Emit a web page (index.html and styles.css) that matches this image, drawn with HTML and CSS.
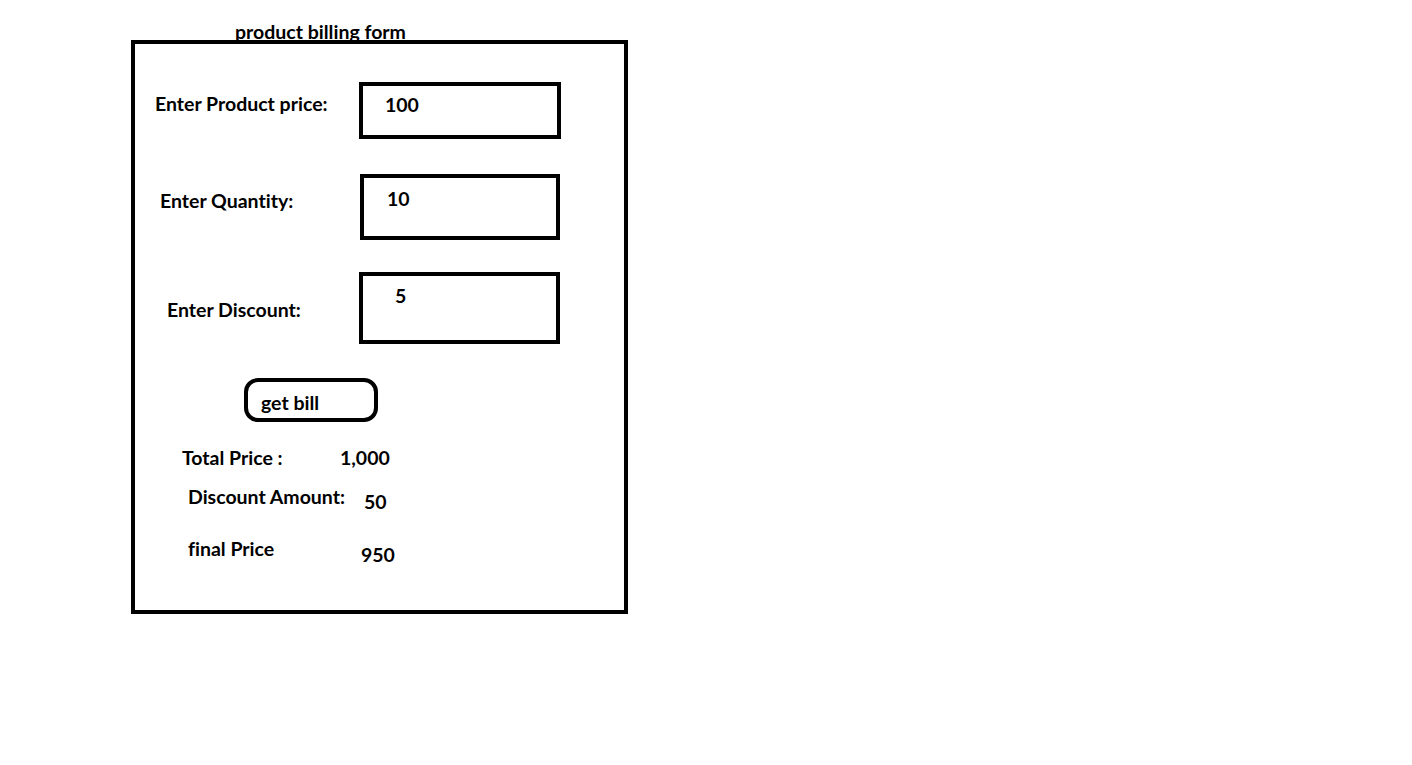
FILE: index.html
```html
<!DOCTYPE html>
<html lang="en">
  <head>
    <meta charset="UTF-8" />
    <meta name="viewport" content="width=device-width, initial-scale=1.0" />
    <title>product billing form</title>
    <link rel="stylesheet" href="styles.css">
  </head>

  <body>
    <div class="page">
      <h1 class="title">product billing form</h1>

      <form class="bill-form" onsubmit="return false">
        <div class="field field-price">
          <label for="price">Enter Product price:</label>
          <input id="price" class="box" type="text" value="100" />
        </div>

        <div class="field field-qty">
          <label for="qty">Enter Quantity:</label>
          <input id="qty" class="box" type="text" value="10" />
        </div>

        <div class="field field-disc">
          <label for="disc">Enter Discount:</label>
          <input id="disc" class="box" type="text" value="5" />
        </div>

        <button class="get-bill" type="button">get bill</button>

        <div class="result result-total">
          <span class="result-label">Total Price :</span>
          <span class="result-value">1,000</span>
        </div>
        <div class="result result-disc">
          <span class="result-label">Discount Amount:</span>
          <span class="result-value">50</span>
        </div>
        <div class="result result-final">
          <span class="result-label">final Price</span>
          <span class="result-value">950</span>
        </div>
      </form>
    </div>
  </body>
</html>
```

FILE: styles.css
```css
html, body {
  margin: 0;
  padding: 0;
  background: #fff;
  color: #000;
  font-family: Lato, 'Open Sans', sans-serif;
  font-weight: 700;
  font-variant-ligatures: none;
}

.page {
  padding-left: 131px;
}

.title {
  margin: 0 0 -5px 104px;
  padding-top: 19px;
  font-size: 19.5px;
  line-height: 26px;
  font-weight: 700;
}

.bill-form {
  position: relative;
  box-sizing: border-box;
  width: 497px;
  height: 574px;
  border: 4px solid #000;
  background: #fff;
  display: flex;
  flex-direction: column;
  align-items: flex-start;
}

.field {
  display: flex;
  align-items: flex-start;
  font-size: 19.5px;
  line-height: 22px;
}

.box {
  box-sizing: border-box;
  border: 4px solid #000;
  border-radius: 0;
  background: #fff;
  font: inherit;
  font-size: 19.5px;
  color: #000;
  padding-top: 0;
  outline: none;
}

.field-price {
  margin-top: 38px;
  padding-left: 20px;
}
.field-price label {
  width: 204px;
  padding-top: 11px;
}
.field-price .box {
  width: 202px;
  height: 57px;
  padding: 0 0 13px 22px;
}

.field-qty {
  margin-top: 35px;
  padding-left: 25px;
}
.field-qty label {
  width: 200px;
  padding-top: 16px;
}
.field-qty .box {
  width: 200px;
  height: 66px;
  padding: 0 0 18px 23px;
}

.field-disc {
  margin-top: 32px;
  padding-left: 32px;
}
.field-disc label {
  width: 192px;
  padding-top: 27px;
}
.field-disc .box {
  width: 201px;
  height: 72px;
  padding: 0 0 26px 32px;
}

.get-bill {
  margin: 34px 0 0 109px;
  box-sizing: border-box;
  width: 134px;
  height: 44px;
  border: 4px solid #000;
  border-radius: 14px;
  background: #fff;
  color: #000;
  font: inherit;
  font-size: 19.5px;
  text-align: left;
  padding: 5px 0 0 13px;
}

.result {
  display: flex;
  align-items: flex-start;
  font-size: 19.5px;
  line-height: 22px;
}

.result-total {
  margin-top: 25px;
  padding-left: 47px;
}
.result-total .result-label {
  width: 158px;
}

.result-disc {
  margin-top: 17px;
  padding-left: 53px;
}
.result-disc .result-label {
  width: 176px;
}
.result-disc .result-value {
  padding-top: 5px;
}

.result-final {
  margin-top: 25px;
  padding-left: 53px;
}
.result-final .result-label {
  width: 173px;
}
.result-final .result-value {
  padding-top: 6px;
}
```
